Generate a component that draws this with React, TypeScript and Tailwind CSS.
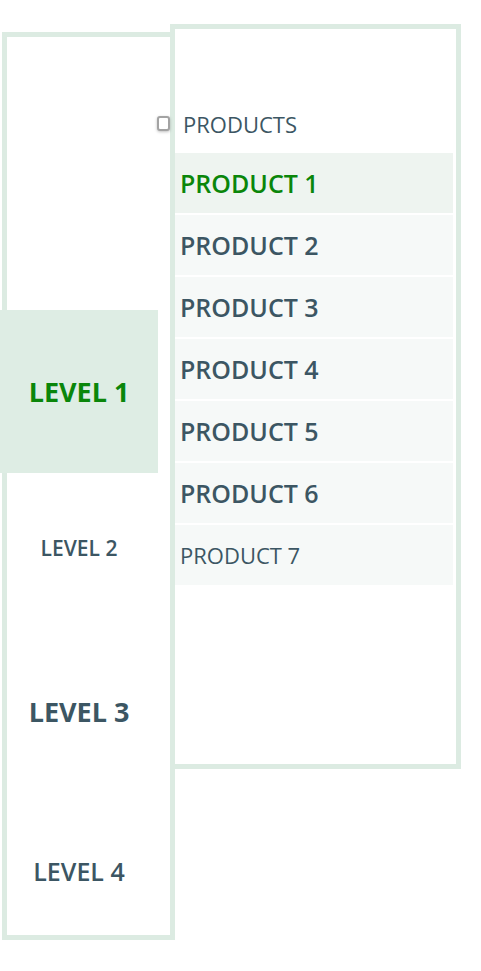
import React from "react";

const levels = [
  { label: "LEVEL 1", active: true, h: "h-[163px]", size: "text-[27px] font-bold" },
  { label: "LEVEL 2", active: false, h: "h-[150px]", size: "text-[21px] font-semibold" },
  { label: "LEVEL 3", active: false, h: "h-[176px]", size: "text-[27px] font-bold" },
  { label: "LEVEL 4", active: false, h: "h-[144px]", size: "text-[25px] font-semibold" },
];

const products = [
  "PRODUCT 1",
  "PRODUCT 2",
  "PRODUCT 3",
  "PRODUCT 4",
  "PRODUCT 5",
  "PRODUCT 6",
  "PRODUCT 7",
];

export default function App() {
  return (
    <div className="flex min-h-[971px] items-start bg-white pl-[2px] font-['Open_Sans',sans-serif]">
      {/* levels */}
      <div className="mt-[32px] h-[908px] w-[173px] shrink-0 border-[5px] border-[#dcebe2] pt-[273px]">
        {levels.map((l) => (
          <div
            key={l.label}
            className={`-ml-[7px] flex w-[158px] items-center justify-center leading-none ${l.h} ${
              l.active ? "bg-[#deede4] text-[#0a860a]" : "text-[#3c5663]"
            }`}
          >
            <span className={l.size}>{l.label}</span>
          </div>
        ))}
      </div>

      {/* products */}
      <div className="relative z-10 -ml-[5px] mt-[24px] h-[745px] w-[291px] shrink-0 border-[5px] border-[#dcebe2] bg-white pr-[3px] pt-[66px]">
        <div className="relative flex h-[58px] items-center pl-[8px] leading-none">
          <span className="absolute -left-[18px] top-[21px] h-[15px] w-[13px] rounded-[3px] border-2 border-[#a3a3a3] bg-white shadow-[0_1px_3px_rgba(0,0,0,0.25)]" />
          <span className="text-[22px] font-medium text-[#3c5663]">PRODUCTS</span>
        </div>
        <div className="flex flex-col gap-[2px]">
          {products.map((p, i) => (
            <div
              key={p}
              className={`flex h-[60px] items-center pl-[5px] leading-none ${
                i === 0 ? "bg-[#eef4f0]" : "bg-[#f6f9f8]"
              }`}
            >
              <span
                className={
                  i === 0
                    ? "text-[25px] font-semibold text-[#0a860a]"
                    : i === 6
                      ? "text-[22px] font-medium text-[#3c5663]"
                      : "text-[25px] font-semibold text-[#3c5663]"
                }
              >
                {p}
              </span>
            </div>
          ))}
        </div>
      </div>
    </div>
  );
}
